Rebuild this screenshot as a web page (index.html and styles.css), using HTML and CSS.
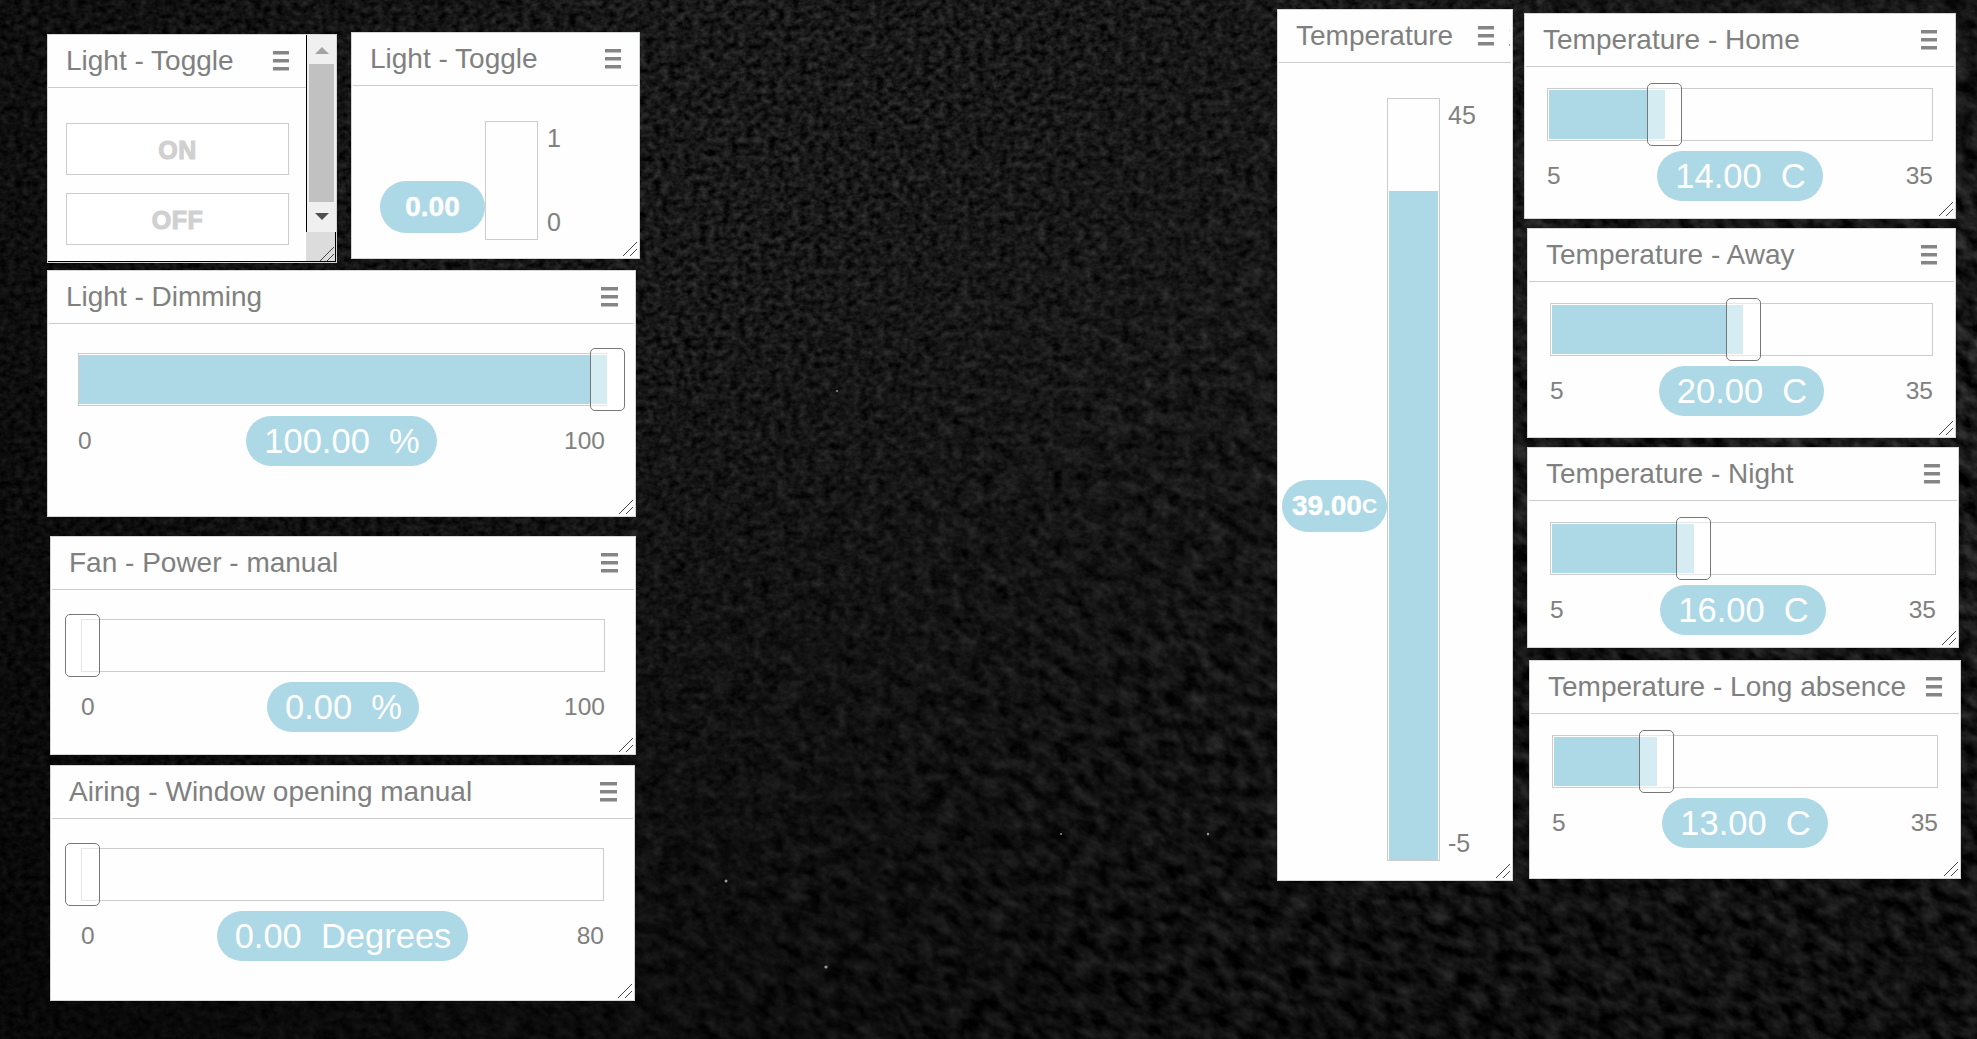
FILE: index.html
```
<!DOCTYPE html>
<html lang="en">
<head>
<meta charset="utf-8">
<title>Home dashboard</title>
<link rel="stylesheet" href="styles.css">
</head>
<body>
<svg class="leather" width="1977" height="1039" aria-hidden="true">
  <defs>
    <filter id="fine" x="0" y="0" width="100%" height="100%" color-interpolation-filters="sRGB">
      <feTurbulence type="fractalNoise" baseFrequency="0.13 0.16" numOctaves="4" seed="4"/>
      <feColorMatrix values=".3 0 0 0 -.055  .3 0 0 0 -.055  .3 0 0 0 -.055  0 0 0 0 1"/>
    </filter>
    <filter id="coarse" x="0" y="0" width="100%" height="100%" color-interpolation-filters="sRGB">
      <feTurbulence type="fractalNoise" baseFrequency="0.05 0.085" numOctaves="5" seed="9"/>
      <feColorMatrix values=".4 0 0 0 -.105  .4 0 0 0 -.105  .4 0 0 0 -.105  0 0 0 0 1"/>
    </filter>
    <linearGradient id="fade" x1=".35" y1=".3" x2=".8" y2=".6">
      <stop offset="0" stop-color="#000"/><stop offset="1" stop-color="#fff"/>
    </linearGradient>
    <linearGradient id="shade" x1=".6" y1="0" x2=".4" y2="1">
      <stop offset=".3" stop-color="#000" stop-opacity="0"/><stop offset="1" stop-color="#000" stop-opacity=".45"/>
    </linearGradient>
    <linearGradient id="side" x1="0" y1="0" x2="1" y2="0">
      <stop offset="0" stop-color="#000" stop-opacity=".4"/><stop offset=".35" stop-color="#000" stop-opacity="0"/>
    </linearGradient>
    <mask id="rightside"><rect width="1977" height="1039" fill="url(#fade)"/></mask>
  </defs>
  <rect width="1977" height="1039" filter="url(#fine)"/>
  <g mask="url(#rightside)"><g transform="rotate(35 1400 500)"><rect x="300" y="-700" width="2200" height="2400" filter="url(#coarse)"/></g></g>
  <rect width="1977" height="1039" fill="url(#shade)"/>
  <rect width="1977" height="1039" fill="url(#side)"/>
  <g fill="#999"><circle cx="726" cy="881" r="1.5"/><circle cx="826" cy="967" r="1.6"/><circle cx="1208" cy="834" r="1.2"/><circle cx="1061" cy="834" r="1"/><circle cx="837" cy="391" r="1"/></g>
</svg>
<svg width="0" height="0" class="symbols" aria-hidden="true">
  <symbol id="menu" viewBox="0 0 16 20" preserveAspectRatio="none"><path fill="#858585" d="M0 0h16v3.6H0zM0 8h16v3.6H0zM0 16h16v3.6H0z"/></symbol>
  <symbol id="grip" viewBox="0 0 14 14"><path fill="none" stroke="#444" d="M0 14L14 0M7 14L14 7"/></symbol>
</svg>

<main class="dashboard">
  <section class="card toggle-buttons">
    <div class="pane">
      <header><h2>Light - Toggle</h2><svg class="menu"><use href="#menu"/></svg></header>
      <div class="buttons"><button>ON</button><button>OFF</button></div>
    </div>
    <div class="scrollbar">
      <div class="rail"><i class="up"></i><b class="thumb"></b><i class="down"></i></div>
      <div class="corner"></div>
    </div>
    <svg class="grip"><use href="#grip"/></svg>
  </section>

  <section class="card toggle-level">
    <header><h2>Light - Toggle</h2><svg class="menu"><use href="#menu"/></svg></header>
    <div class="vertical">
      <div class="bubble">0.00</div>
      <div class="vtrack"><div class="vfill" style="height:0%"></div></div>
      <div class="scale"><span>1</span><span>0</span></div>
    </div>
    <svg class="grip"><use href="#grip"/></svg>
  </section>

  <section class="card wide dimming">
    <header><h2>Light - Dimming</h2><svg class="menu"><use href="#menu"/></svg></header>
    <div class="slider">
      <div class="track full"><div class="fill" style="width:100%"></div><div class="handle" style="left:100%"></div></div>
      <div class="values"><span>0</span><output>100.00  %</output><span>100</span></div>
    </div>
    <svg class="grip"><use href="#grip"/></svg>
  </section>

  <section class="card wide fan">
    <header><h2>Fan - Power - manual</h2><svg class="menu"><use href="#menu"/></svg></header>
    <div class="slider">
      <div class="track"><div class="fill" style="width:0%"></div><div class="handle" style="left:0%"></div></div>
      <div class="values"><span>0</span><output>0.00  %</output><span>100</span></div>
    </div>
    <svg class="grip"><use href="#grip"/></svg>
  </section>

  <section class="card wide airing">
    <header><h2>Airing - Window opening manual</h2><svg class="menu"><use href="#menu"/></svg></header>
    <div class="slider">
      <div class="track"><div class="fill" style="width:0%"></div><div class="handle" style="left:0%"></div></div>
      <div class="values"><span>0</span><output>0.00  Degrees</output><span>80</span></div>
    </div>
    <svg class="grip"><use href="#grip"/></svg>
  </section>

  <section class="card thermometer">
    <header><h2>Temperature</h2><svg class="menu"><use href="#menu"/></svg><i class="clipped"></i></header>
    <div class="vertical">
      <div class="bubble">39.00<small>C</small></div>
      <div class="vtrack"><div class="vfill" style="height:88%"></div></div>
      <div class="scale"><span>45</span><span>-5</span></div>
    </div>
    <svg class="grip"><use href="#grip"/></svg>
  </section>

  <section class="card home">
    <header><h2>Temperature - Home</h2><svg class="menu"><use href="#menu"/></svg></header>
    <div class="slider">
      <div class="track"><div class="fill" style="width:30.4%"></div><div class="handle" style="left:30.2%"></div></div>
      <div class="values"><span>5</span><output>14.00  C</output><span>35</span></div>
    </div>
    <svg class="grip"><use href="#grip"/></svg>
  </section>

  <section class="card away">
    <header><h2>Temperature - Away</h2><svg class="menu"><use href="#menu"/></svg></header>
    <div class="slider">
      <div class="track"><div class="fill" style="width:50.4%"></div><div class="handle" style="left:50.4%"></div></div>
      <div class="values"><span>5</span><output>20.00  C</output><span>35</span></div>
    </div>
    <svg class="grip"><use href="#grip"/></svg>
  </section>

  <section class="card night">
    <header><h2>Temperature - Night</h2><svg class="menu"><use href="#menu"/></svg></header>
    <div class="slider">
      <div class="track"><div class="fill" style="width:37.2%"></div><div class="handle" style="left:37.1%"></div></div>
      <div class="values"><span>5</span><output>16.00  C</output><span>35</span></div>
    </div>
    <svg class="grip"><use href="#grip"/></svg>
  </section>

  <section class="card absence">
    <header><h2>Temperature - Long absence</h2><svg class="menu"><use href="#menu"/></svg></header>
    <div class="slider">
      <div class="track"><div class="fill" style="width:27%"></div><div class="handle" style="left:26.8%"></div></div>
      <div class="values"><span>5</span><output>13.00  C</output><span>35</span></div>
    </div>
    <svg class="grip"><use href="#grip"/></svg>
  </section>
</main>
</body>
</html>
```
FILE: styles.css
```
* { box-sizing: border-box; }

body {
  margin: 0;
  background: #111;
  color: #808080;
  font-family: "Liberation Sans", Arial, sans-serif;
  overflow: hidden;
}

.leather { position: absolute; left: 0; top: 0; }
.symbols { position: absolute; }

.dashboard { position: relative; width: 1977px; height: 1039px; }

.card {
  position: absolute;
  display: flex;
  flex-direction: column;
  background: #fefefe;
  border: 1px solid #d3d6d6;
}
.toggle-buttons { left: 47px; top: 34px; width: 290px; height: 229px; }
.toggle-level { left: 351px; top: 32px; width: 289px; height: 227px; }
.dimming { left: 47px; top: 270px; width: 589px; height: 247px; }
.fan { left: 50px; top: 536px; width: 586px; height: 219px; }
.airing { left: 50px; top: 765px; width: 585px; height: 236px; }
.thermometer { left: 1277px; top: 9px; width: 236px; height: 872px; }
.home { left: 1524px; top: 13px; width: 432px; height: 206px; }
.away { left: 1527px; top: 228px; width: 429px; height: 210px; }
.night { left: 1527px; top: 447px; width: 432px; height: 201px; }
.absence { left: 1529px; top: 660px; width: 432px; height: 219px; }

header {
  display: flex;
  justify-content: space-between;
  align-items: center;
  height: 53px;
  margin: 0 1px;
  padding: 0 17px 0 17px;
  border-bottom: 1px solid #ccc;
}
h2 { margin: 0; font-size: 28px; font-weight: 400; line-height: 52px; white-space: nowrap; }
.menu { width: 16px; height: 20px; flex: none; }
.wide .menu { width: 17px; margin-right: -1px; }
.grip { position: absolute; right: 2px; bottom: 2px; width: 14px; height: 14px; }

/* Horizontal sliders */
.slider { padding: 21px 22px 0; }
.wide .slider { padding: 29px 30px 0; }
.track { position: relative; height: 53px; padding: 1px; border: 1px solid #ccc; }
.full { margin-right: -2px; padding-left: 0; padding-right: 0; border-right: 0; }
.fill { height: 49px; background: #add8e6; }
.handle {
  position: absolute;
  top: -6px;
  width: 35px;
  height: 63px;
  margin-left: -17px;
  border: 1px solid #777;
  border-radius: 5px;
  background: rgba(255, 255, 255, .5);
}
.values {
  display: grid;
  grid-template-columns: 1fr auto 1fr;
  align-items: center;
  height: 50px;
  margin-top: 10px;
  font-size: 24.5px;
}
.values span { margin-top: -1px; }
.values span:last-child { text-align: right; }
output {
  padding: 0 17px 0 18px;
  border-radius: 25px;
  background: #add8e6;
  color: #fff;
  font-size: 34.5px;
  line-height: 50px;
  white-space: pre;
}

/* Vertical sliders */
.vertical { display: flex; align-items: flex-end; height: 154px; padding-left: 28px; }
.vtrack {
  display: flex;
  flex-direction: column;
  justify-content: flex-end;
  width: 53px;
  height: 119px;
  padding: 1px;
  border: 1px solid #ccc;
}
.vfill { background: #add8e6; }
.thermometer .vtrack { padding-bottom: 0; }
.bubble {
  display: flex;
  justify-content: center;
  align-items: center;
  width: 105px;
  height: 52px;
  margin-bottom: 7px;
  border-radius: 26px;
  background: #add8e6;
  color: #fff;
  font-size: 28px;
  font-weight: 700;
  -webkit-text-stroke: .4px #fff;
}
.bubble small { font-size: 21px; -webkit-text-stroke: 0; }
.scale {
  display: flex;
  flex-direction: column;
  justify-content: space-between;
  align-self: flex-end;
  height: 119px;
  padding: 3px 0 3px 9px;
  font-size: 25px;
  line-height: 29px;
}
.thermometer .vertical { height: 798px; padding-left: 4px; }
.thermometer .vtrack { height: 763px; }
.thermometer .scale { height: 763px; padding-left: 8px; }
.thermometer .bubble { margin-bottom: 329px; }
.thermometer header { position: relative; }
.clipped { position: absolute; right: 1px; top: 20px; width: 1px; height: 16px; border: solid #ccc; border-width: 1px 0 2px; border-bottom-color: #999; }

/* Card whose content overflows */
.toggle-buttons { flex-direction: row; border-bottom: 0; box-shadow: inset 0 -1px #d3d6d6, inset 0 -2px #000; }
.pane { width: 259px; height: 226px; border-right: 1px solid #000; }
.pane header { margin: 0; padding-left: 18px; }
.buttons { display: flex; flex-direction: column; gap: 18px; padding: 35px 17px 0 18px; }
.buttons button {
  height: 52px;
  border: 1px solid #ccc;
  padding: 2px 0 0;
  background: #fff;
  color: #d0d0d0;
  font: 700 25px "Liberation Sans", Arial, sans-serif;
  letter-spacing: .5px;
  -webkit-text-stroke: 1.1px #d0d0d0;
}
.scrollbar { display: flex; flex-direction: column; width: 29px; height: 226px; }
.rail { display: flex; flex-direction: column; align-items: center; height: 197px; padding: 12px 0; background: #f0f0f0; }
.thumb { width: 25px; height: 138px; margin: 10px 0 11px; background: #c1c1c1; }
.up, .down { width: 0; height: 0; border: 7px solid transparent; }
.up { border-top: 0; border-bottom-color: #a3a3a3; }
.down { border-bottom: 0; border-top-color: #505050; }
.corner { height: 29px; margin-left: -1px; background: #dcdcdc; border-right: 1px solid #000; }
```
